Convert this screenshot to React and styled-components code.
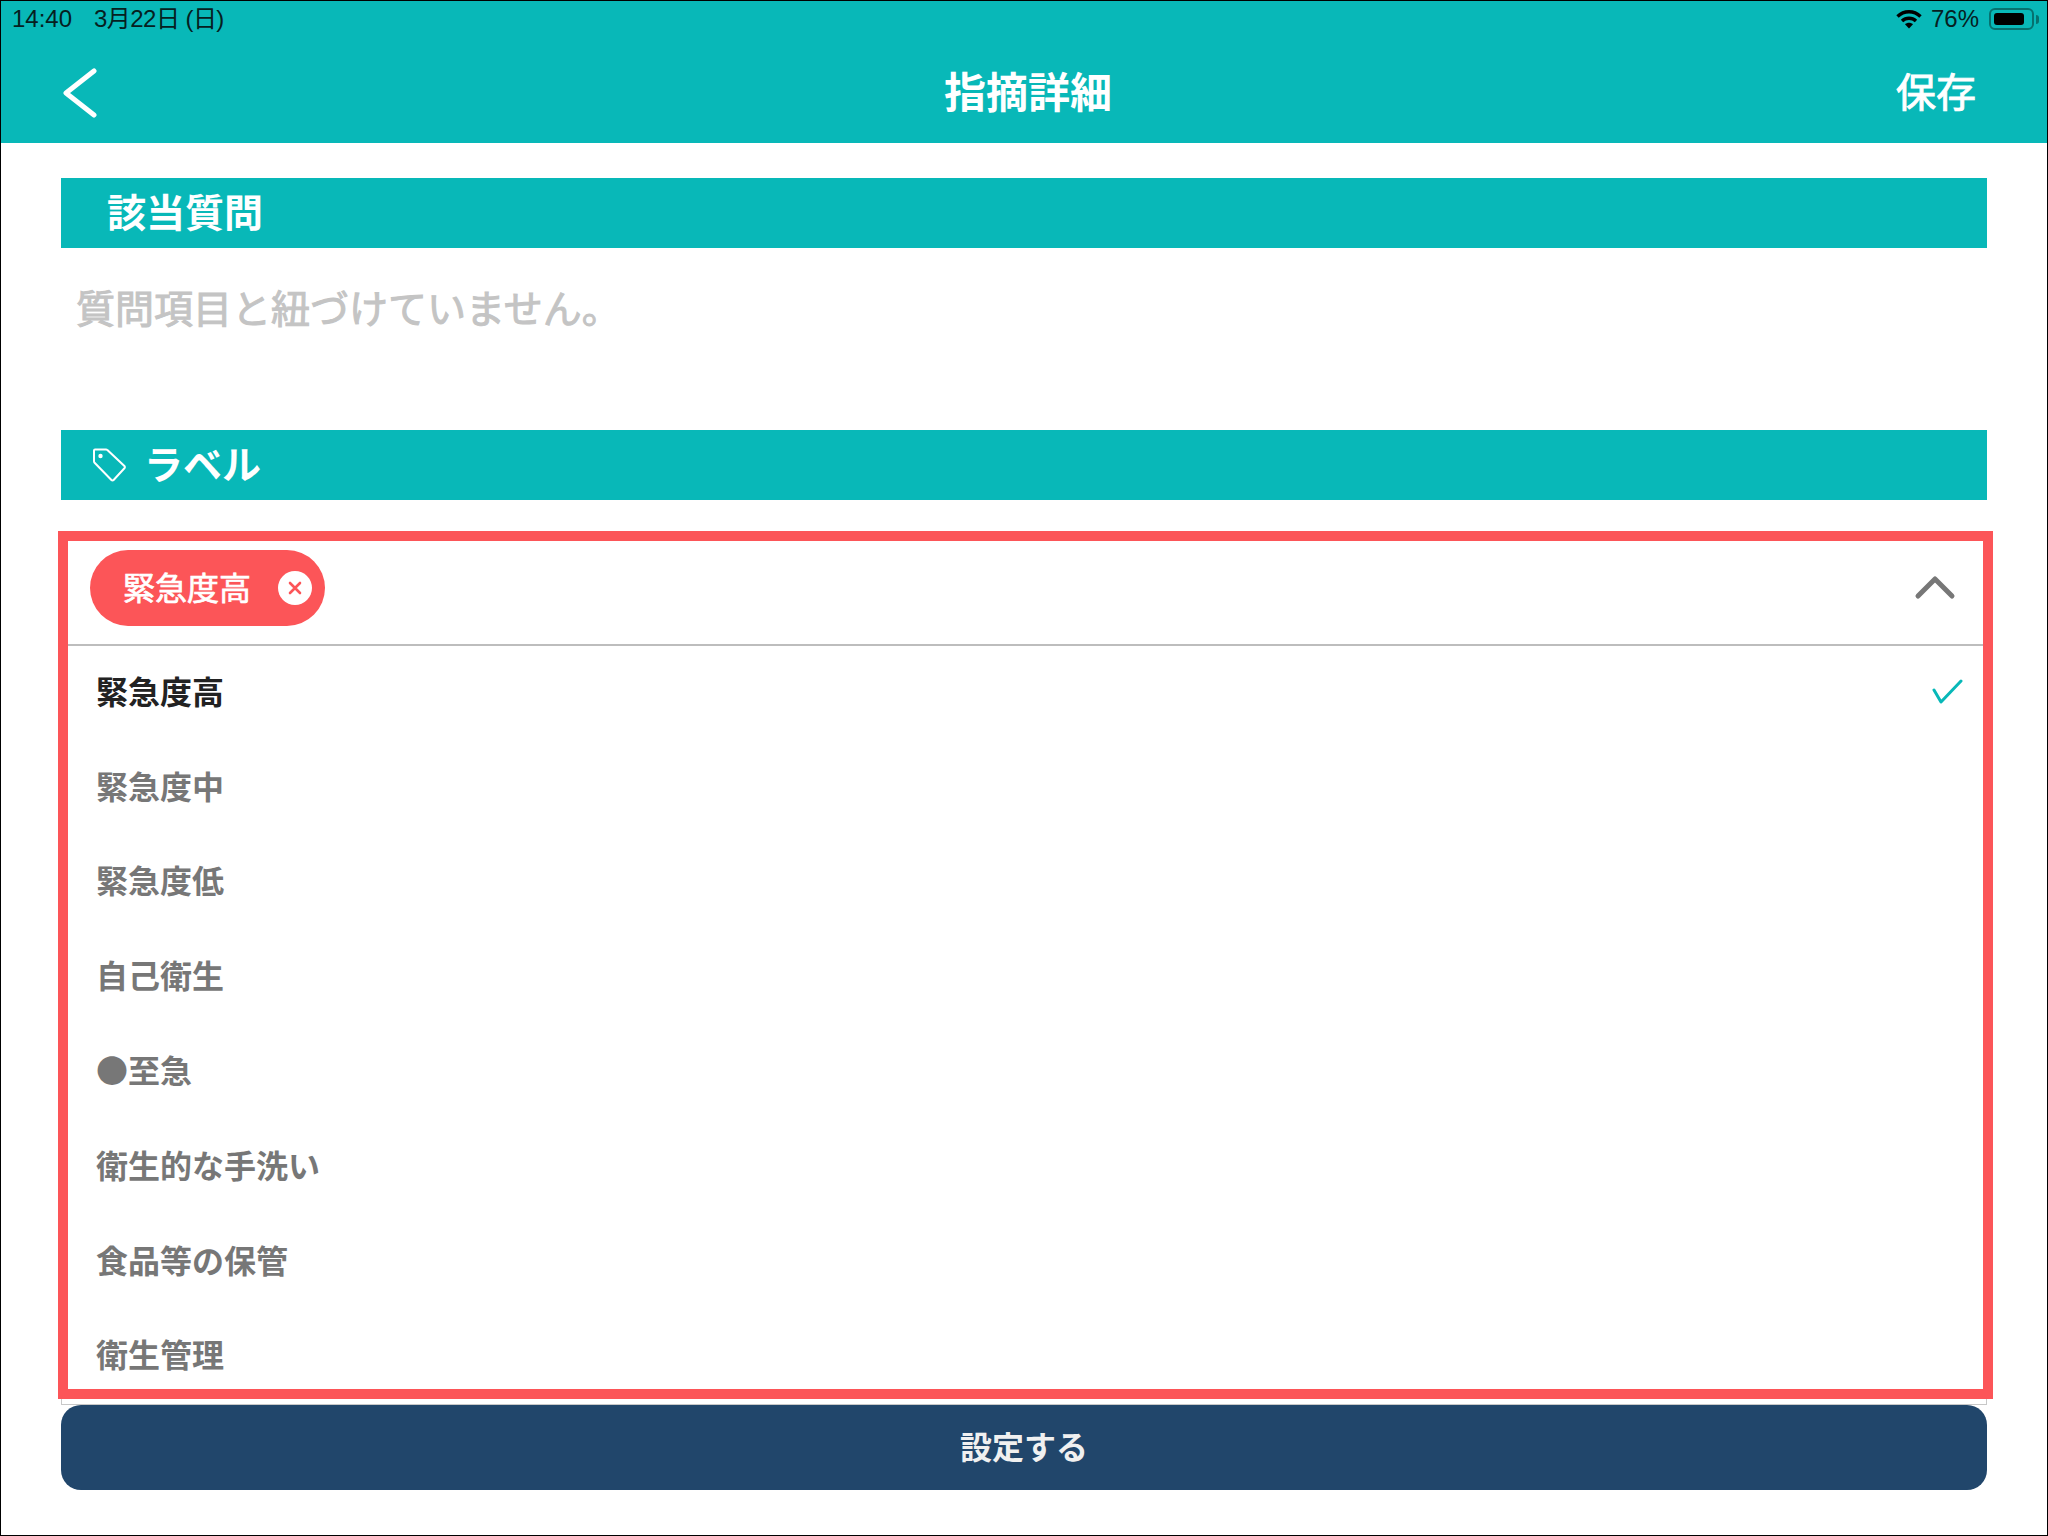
import React from "react";
import styled, { createGlobalStyle } from "styled-components";

const labels = [
  "緊急度高",
  "緊急度中",
  "緊急度低",
  "自己衛生",
  "●至急",
  "衛生的な手洗い",
  "食品等の保管",
  "衛生管理",
];

const App = () => {
  return (
    <Frame>
      <GlobalStyle />
      <Header>
        <StatusBar>
          <StatusGroup>
            <span>14:40</span>
            <StatusDate>3月22日 (日)</StatusDate>
          </StatusGroup>
          <StatusRight>
            <svg width="26" height="20" viewBox="0 0 26 20">
              <path d="M1.5 7.5C8 1.2 18 1.2 24.5 7.5" fill="none" stroke="#000" strokeWidth="3.4" />
              <path d="M6 12C10 8.3 16 8.3 20 12" fill="none" stroke="#000" strokeWidth="3.4" />
              <path d="M9 15.2c2.4-2 5.6-2 8 0L13 19.5z" fill="#000" />
            </svg>
            <Percent>76%</Percent>
            <Battery>
              <BatteryFill />
            </Battery>
            <BatteryTip />
          </StatusRight>
        </StatusBar>
        <Nav>
          <BackButton>
            <svg width="36" height="50" viewBox="0 0 36 50">
              <polyline
                points="32,3 4,25 32,47"
                fill="none"
                stroke="#fff"
                strokeWidth="5"
                strokeLinecap="round"
                strokeLinejoin="round"
              />
            </svg>
          </BackButton>
          <NavTitle>指摘詳細</NavTitle>
          <SaveButton>保存</SaveButton>
        </Nav>
      </Header>

      <Content>
        <SectionBar>
          <SectionTitle>該当質問</SectionTitle>
        </SectionBar>
        <Placeholder>質問項目と紐づけていません。</Placeholder>

        <SectionBar $withIcon>
          <svg width="36" height="36" viewBox="0 0 36 36">
            <path
              d="M3 2.5h11a2 2 0 0 1 1.4.6l17 16a1.5 1.5 0 0 1 0 2.2L21.6 33a1.5 1.5 0 0 1-2.2 0L2.6 15.7a2 2 0 0 1-.6-1.4V3.5a1 1 0 0 1 1-1z"
              fill="none"
              stroke="#fff"
              strokeWidth="2"
            />
            <circle cx="8.5" cy="9" r="2.2" fill="#fff" />
          </svg>
          <SectionTitle>ラベル</SectionTitle>
        </SectionBar>

        <Dropdown>
          <Selected>
            <Pill>
              <PillLabel>緊急度高</PillLabel>
              <PillClose>
                <svg width="14" height="14" viewBox="0 0 14 14">
                  <path d="M2 2l10 10M12 2L2 12" stroke="#fc5558" strokeWidth="2.6" strokeLinecap="round" />
                </svg>
              </PillClose>
            </Pill>
            <svg width="42" height="26" viewBox="0 0 42 26">
              <polyline
                points="4,22 21,5 38,22"
                fill="none"
                stroke="#777"
                strokeWidth="5"
                strokeLinecap="round"
                strokeLinejoin="round"
              />
            </svg>
          </Selected>
          <List>
            {labels.map((label, i) => (
              <Row key={label} $active={i === 0}>
                <RowLabel>{label}</RowLabel>
                {i === 0 && (
                  <svg width="32" height="28" viewBox="0 0 32 28">
                    <polyline
                      points="3,11 10,23 30,2"
                      fill="none"
                      stroke="#08b8b8"
                      strokeWidth="3"
                      strokeLinecap="round"
                      strokeLinejoin="round"
                    />
                  </svg>
                )}
              </Row>
            ))}
          </List>
          <Highlight />
        </Dropdown>

        <SubmitButton>設定する</SubmitButton>
      </Content>
    </Frame>
  );
};
export default App;

const GlobalStyle = createGlobalStyle`
  html, body {
    margin: 0;
    padding: 0;
    background: #fff;
  }
  * {
    box-sizing: border-box;
  }
`;

const Frame = styled.div`
  width: 2048px;
  height: 1536px;
  border: 1px solid #000;
  background: #fff;
  font-family: "Noto Sans CJK JP", "Noto Sans", sans-serif;
  overflow: hidden;
`;

const Header = styled.header`
  height: 142px;
  background: #08b8b8;
`;

const StatusBar = styled.div`
  height: 36px;
  padding: 0 8px 0 11px;
  display: flex;
  align-items: center;
  justify-content: space-between;
  font-family: "Liberation Sans", "Noto Sans CJK JP", sans-serif;
  font-size: 24px;
  line-height: 30px;
  color: #06201f;
`;

const StatusGroup = styled.div`
  display: flex;
  align-items: center;
  gap: 22px;

  & > span {
    display: block;
    height: 30px;
  }
`;

const StatusDate = styled.span`
  letter-spacing: -0.55px;
`;

const StatusRight = styled.div`
  display: flex;
  align-items: center;
`;

const Percent = styled.span`
  margin: 0 10px 0 9px;
`;

const Battery = styled.div`
  width: 45px;
  height: 22px;
  padding: 3px;
  border: 2px solid #06716f;
  border-radius: 6px;
`;

const BatteryFill = styled.div`
  width: 30px;
  height: 100%;
  background: #000;
  border-radius: 3px;
`;

const BatteryTip = styled.div`
  width: 3px;
  height: 9px;
  margin-left: 2px;
  background: #06716f;
  border-radius: 0 3px 3px 0;
`;

const Nav = styled.div`
  height: 106px;
  padding: 0 71px 0 61px;
  display: flex;
  align-items: center;
  justify-content: space-between;
  color: #fff;
`;

const BackButton = styled.div`
  width: 98px;
  height: 50px;
  margin-top: 5px;
`;

const NavTitle = styled.div`
  font-size: 42px;
  font-weight: 700;
  line-height: 1;
`;

const SaveButton = styled.div`
  width: 80px;
  font-size: 40px;
  line-height: 1;
  -webkit-text-stroke: 0.9px #fff;
`;

const Content = styled.main`
  padding: 35px 60px 0;
`;

const SectionBar = styled.div`
  height: 70px;
  display: flex;
  align-items: center;
  gap: 16px;
  padding-left: ${(props) => (props.$withIcon ? "31px" : "46px")};
  background: #08b8b8;
`;

const SectionTitle = styled.h2`
  margin: 0 0 5px;
  font-size: 39px;
  font-weight: 700;
  line-height: 1;
  color: #fff;
`;

const Placeholder = styled.p`
  height: 182px;
  margin: 0;
  padding: 33px 0 0 15px;
  font-size: 39px;
  line-height: 50px;
  color: #c4c4c4;
  -webkit-text-stroke: 1px #c4c4c4;
`;

const Dropdown = styled.section`
  position: relative;
  height: 870px;
  margin-top: 35px;
  border: 1px solid #c8c8c8;
  border-top: 0;
`;

const Selected = styled.div`
  height: 111px;
  padding: 15px 30px 0 28px;
  display: flex;
  align-items: flex-start;
  justify-content: space-between;
  border-bottom: 2px solid #bdbdbd;

  & > svg {
    margin-top: 24px;
  }
`;

const Pill = styled.div`
  height: 76px;
  padding: 0 13px 0 33px;
  display: flex;
  align-items: center;
  gap: 27px;
  border-radius: 38px;
  background: #fc5558;
  font-size: 32px;
  color: #fff;
  -webkit-text-stroke: 0.7px #fff;
`;

const PillLabel = styled.span`
  margin-bottom: 5px;
`;

const PillClose = styled.span`
  width: 34px;
  height: 34px;
  display: flex;
  align-items: center;
  justify-content: center;
  border-radius: 50%;
  background: #fff;
`;

const List = styled.ul`
  margin: 0;
  padding: 0;
  list-style: none;
`;

const Row = styled.li`
  height: 94.8px;
  padding: 0 23px 0 34px;
  display: flex;
  align-items: center;
  justify-content: space-between;
  font-size: 32px;
  font-weight: 700;
  color: ${(props) => (props.$active ? "#222" : "#777")};
`;

const RowLabel = styled.span`
  margin-bottom: 7px;
`;

const Highlight = styled.div`
  position: absolute;
  top: -4px;
  left: -4px;
  right: -7px;
  bottom: 5px;
  border: 10px solid #fc5558;
  pointer-events: none;
`;

const SubmitButton = styled.button`
  display: block;
  width: 100%;
  height: 85px;
  padding: 0 0 5px;
  border: 0;
  border-radius: 20px;
  background: #21466b;
  font-family: inherit;
  font-size: 32px;
  font-weight: 700;
  color: #f0f0f0;
`;
